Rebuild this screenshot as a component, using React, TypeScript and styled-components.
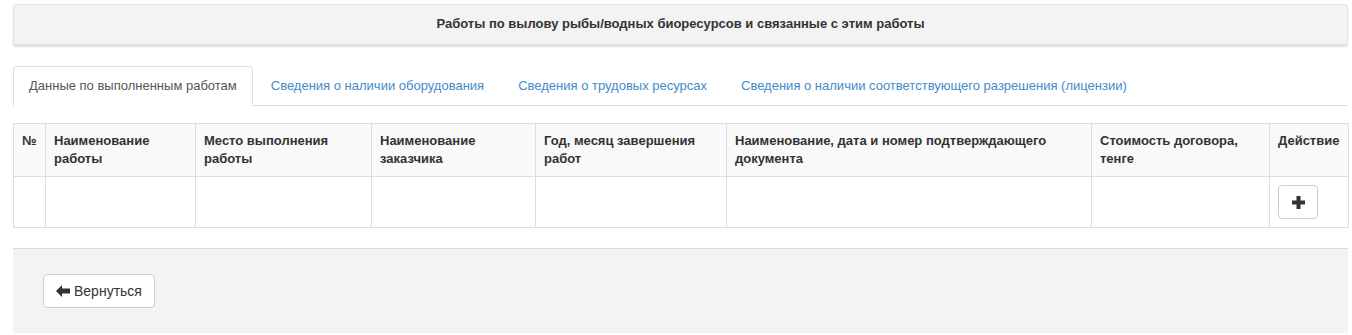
import styled, {createGlobalStyle} from 'styled-components';

const GlobalStyle = createGlobalStyle`
	html, body {
		margin     : 0;
		padding    : 0;
		background : #fff;
	}
	body {
		font-family : "Liberation Sans", Arial, sans-serif;
		font-size   : 13px;
		line-height : 1.42857;
		color       : #333;
	}
	* {
		box-sizing : border-box;
	}
`;

const Page = styled.div`
	display        : flex;
	flex-direction : column;
	padding        : 4px 4px 0 13px;
`;

const TitlePanel = styled.div`
	background    : #f3f3f3;
	border        : 1px solid #e3e3e3;
	border-radius : 3px;
	box-shadow    : 0 2px 2px rgba(0, 0, 0, 0.12);
	padding       : 10px 15px;
	text-align    : center;
	font-weight   : bold;
`;

const Tabs = styled.ul`
	display       : flex;
	list-style    : none;
	margin        : 21px 0 0;
	padding       : 0;
	border-bottom : 1px solid #ddd;
`;

const Tab = styled.li<{ active?: boolean }>`
	margin-right  : 2px;
	margin-bottom : -1px;
	padding       : 10px 15px;
	border        : 1px solid ${({active}) => active ? '#ddd' : 'transparent'};
	border-bottom-color : ${({active}) => active ? '#fff' : 'transparent'};
	border-radius : 4px 4px 0 0;
	background    : ${({active}) => active ? '#fff' : 'transparent'};
	color         : ${({active}) => active ? '#555' : '#428bca'};
	cursor        : pointer;
`;

const Table = styled.table`
	margin-top      : 17px;
	width           : 100%;
	border-collapse : collapse;
	table-layout    : fixed;
	border          : 1px solid #ddd;
	line-height     : 18px;
`;

const HeadCell = styled.th`
	background     : #f9f9f9;
	border         : 1px solid #ddd;
	padding        : 8px;
	text-align     : left;
	vertical-align : top;
	font-weight    : bold;
`;

const Cell = styled.td`
	border         : 1px solid #ddd;
	padding        : 8px;
	vertical-align : top;
`;

const Button = styled.button`
	display       : inline-flex;
	align-items   : center;
	gap           : 4px;
	height        : 34px;
	padding       : 6px 12px;
	font-family   : inherit;
	font-size     : 14px;
	line-height   : 20px;
	color         : #333;
	background    : #fff;
	border        : 1px solid #ccc;
	border-radius : 4px;
	cursor        : pointer;
`;

const PlusButton = styled(Button)`
	width           : 40px;
	justify-content : center;
`;

const Footer = styled.div`
	margin-top  : 20px;
	height      : 85px;
	background  : #f3f3f3;
	border-top  : 1px solid #ddd;
	padding     : 25px 30px;
`;

const PlusIcon = () => <svg width="13" height="13" viewBox="0 0 13 13">
	<path d="M4.5 0h4v4.5H13v4H8.5V13h-4V8.5H0v-4h4.5z" fill="#333"/>
</svg>;

const ArrowIcon = () => <svg width="14" height="12" viewBox="0 0 14 12">
	<path d="M0 6L6 0v3.5h8v5H6V12z" fill="#333"/>
</svg>;

const columns = [
	{title: '№', width: 32},
	{title: 'Наименование работы', width: 150},
	{title: 'Место выполнения работы', width: 176},
	{title: 'Наименование заказчика', width: 164},
	{title: 'Год, месяц завершения работ', width: 191},
	{title: 'Наименование, дата и номер подтверждающего документа', width: 365},
	{title: 'Стоимость договора, тенге', width: 178},
	{title: 'Действие', width: 79}
];

const tabs = [
	'Данные по выполненным работам',
	'Сведения о наличии оборудования',
	'Сведения о трудовых ресурсах',
	'Сведения о наличии соответствующего разрешения (лицензии)'
];

export default function App() {
	return <>
		<GlobalStyle/>
		<Page>
			<TitlePanel>Работы по вылову рыбы/водных биоресурсов и связанные с этим работы</TitlePanel>
			<Tabs>
				{tabs.map((tab, index) => <Tab key={tab} active={index === 0}>{tab}</Tab>)}
			</Tabs>
			<Table>
				<colgroup>
					{columns.map(column => <col key={column.title} style={{width: column.width}}/>)}
				</colgroup>
				<thead>
				<tr>
					{columns.map(column => <HeadCell key={column.title}>{column.title}</HeadCell>)}
				</tr>
				</thead>
				<tbody>
				<tr>
					{columns.slice(0, -1).map(column => <Cell key={column.title}/>)}
					<Cell><PlusButton><PlusIcon/></PlusButton></Cell>
				</tr>
				</tbody>
			</Table>
			<Footer>
				<Button><ArrowIcon/>Вернуться</Button>
			</Footer>
		</Page>
	</>;
}
